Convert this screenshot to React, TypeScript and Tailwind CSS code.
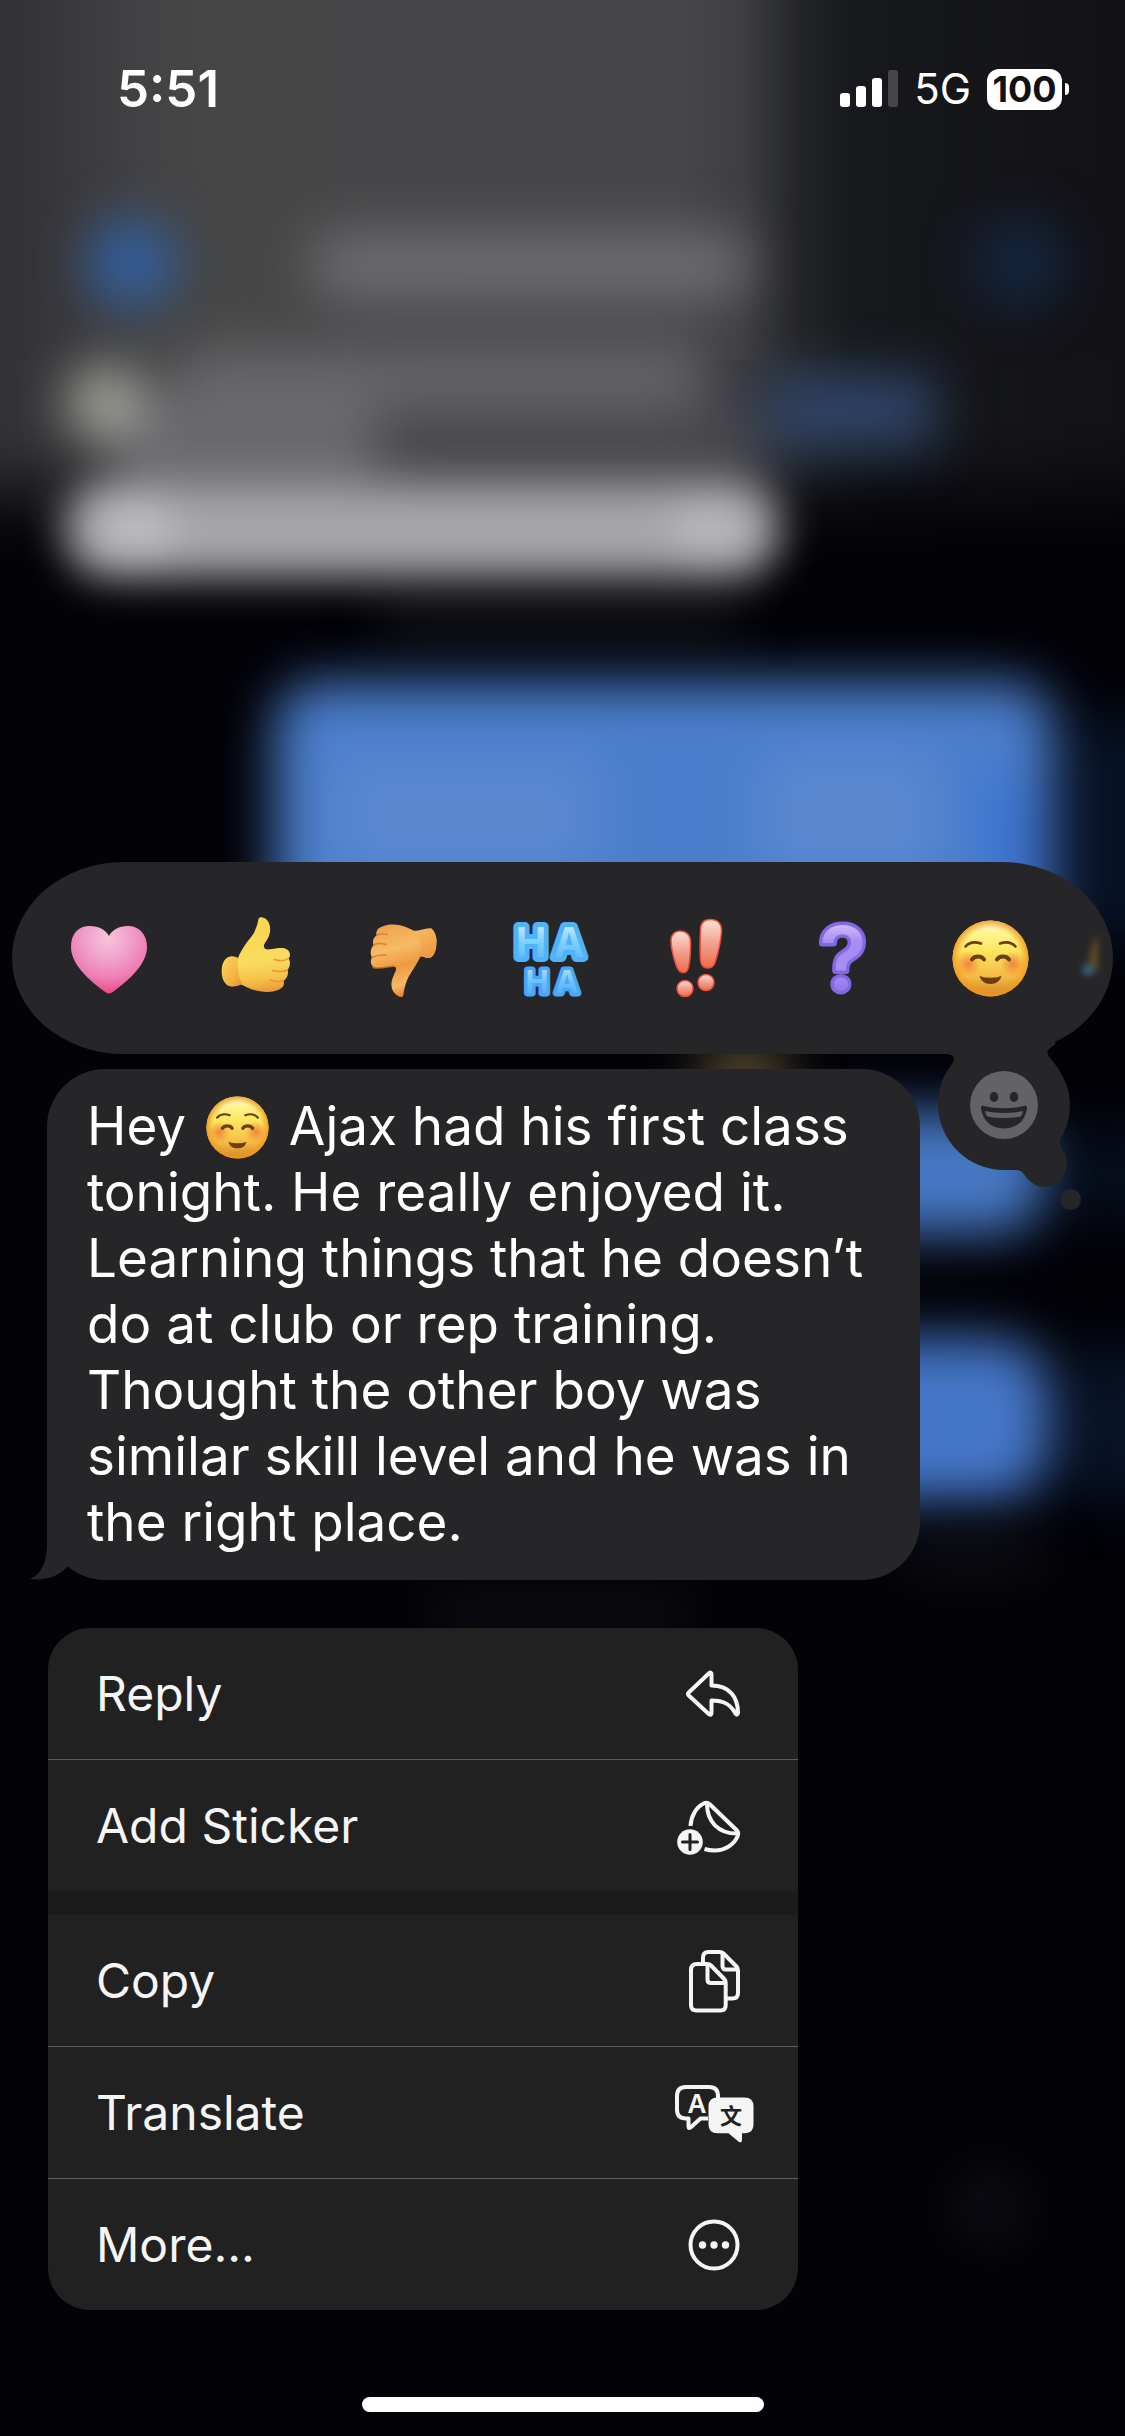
import React from "react";

function Backdrop() {
  return (
    <svg
      aria-hidden="true"
      className="absolute inset-0 h-full w-full"
      viewBox="0 0 1125 2436"
      preserveAspectRatio="xMidYMin slice"
    >
      <defs>
        <linearGradient id="bar" gradientUnits="userSpaceOnUse" x1="0" x2="1125" y1="0" y2="0">
          <stop offset="0" stopColor="#313136" />
          <stop offset="0.05" stopColor="#38373b" />
          <stop offset="0.13" stopColor="#434345" />
          <stop offset="0.2" stopColor="#474747" />
          <stop offset="0.6" stopColor="#47464b" />
          <stop offset="0.66" stopColor="#3f3f42" />
          <stop offset="0.71" stopColor="#242528" />
          <stop offset="0.76" stopColor="#17191d" />
          <stop offset="1" stopColor="#121116" />
        </linearGradient>
        <filter id="b16" x="-60%" y="-60%" width="220%" height="220%" colorInterpolationFilters="sRGB">
          <feGaussianBlur stdDeviation="20" />
        </filter>
        <filter id="b24" x="-60%" y="-60%" width="220%" height="220%" colorInterpolationFilters="sRGB">
          <feGaussianBlur stdDeviation="26" />
        </filter>
        <filter id="b32" x="-60%" y="-60%" width="220%" height="220%" colorInterpolationFilters="sRGB">
          <feGaussianBlur stdDeviation="36" />
        </filter>
      </defs>
      <rect width="1125" height="2436" fill="#020207" />
      <rect x="-200" y="-200" width="1525" height="693" fill="url(#bar)" filter="url(#b32)" />
      <rect width="1125" height="360" fill="url(#bar)" />
      <g filter="url(#b24)">
        <circle cx="132" cy="263" r="44" fill="#325f9f" />
        <rect x="310" y="232" width="440" height="68" rx="30" fill="#6d6c71" />
        <circle cx="1020" cy="263" r="44" fill="#142742" />
        <rect x="180" y="350" width="520" height="56" fill="#68676c" />
        <rect x="120" y="390" width="255" height="110" fill="#6a696e" />
        <rect x="375" y="420" width="380" height="60" fill="#4b4a4f" />
        <rect x="765" y="375" width="170" height="72" fill="#2f4568" />
        <circle cx="106" cy="404" r="38" fill="#a9a99f" />
        <rect x="380" y="600" width="360" height="34" fill="#18181d" />
      </g>
      <g filter="url(#b16)">
        <rect x="64" y="480" width="716" height="98" rx="44" fill="#a6a5aa" />
        <circle cx="136" cy="528" r="38" fill="#bcbcc0" />
        <circle cx="710" cy="528" r="38" fill="#b6b6bb" />
      </g>
      <g filter="url(#b24)">
        <rect x="1070" y="720" width="200" height="220" fill="#071226" />
        <rect x="1070" y="1350" width="200" height="150" fill="#081326" />
        <rect x="1070" y="1130" width="200" height="90" fill="#060e1c" />
        <rect x="274" y="682" width="780" height="280" rx="44" fill="#4a7dcb" />
        <rect x="330" y="750" width="270" height="130" fill="#5987d0" />
        <rect x="760" y="750" width="180" height="130" fill="#5a88d0" />
        <rect x="985" y="780" width="50" height="140" fill="#3b72d2" />
        <rect x="600" y="1112" width="446" height="122" rx="50" fill="#4778c4" />
        <rect x="600" y="1338" width="450" height="164" rx="56" fill="#4576c8" />
      </g>
      <rect x="0" y="985" width="1125" height="74" fill="#030307" />
      <g filter="url(#b24)">
        <ellipse cx="744" cy="1070" rx="46" ry="26" fill="#6b5a35" />
        <rect x="430" y="1600" width="260" height="30" fill="#121218" />
        <circle cx="990" cy="2207" r="32" fill="#111118" />
        <rect x="900" y="1530" width="140" height="40" fill="#0f1016" />
      </g>
    </svg>
  );
}

function StatusBar() {
  return (
    <header className="relative flex h-[178px] items-center justify-between pl-[117px] pr-[56px] text-white">
      <time className="text-[51px] leading-[60px] font-semibold">5:51</time>
      <div className="flex items-center">
        <svg className="mr-[16px] h-[38px] w-[58px]" viewBox="0 0 58 38" aria-label="Signal, three of four bars" role="img">
          <rect x="0" y="23" width="10" height="14" rx="3" fill="#fff" />
          <rect x="16" y="16" width="10" height="21" rx="3" fill="#fff" />
          <rect x="32" y="8" width="10" height="29" rx="3" fill="#fff" />
          <rect x="48" y="0" width="10" height="37" rx="3" fill="#47474b" />
        </svg>
        <span className="text-[42px] leading-[48px]">5G</span>
        <div className="ml-[16px] flex items-center">
          <span className="flex h-[41px] w-[75px] items-center justify-center rounded-[12px] bg-white text-[36px] leading-[41px] font-bold text-[#121116]">
            100
          </span>
          <span className="ml-[3px] h-[12px] w-[4px] rounded-r-full bg-white" />
        </div>
      </div>
    </header>
  );
}

function SmileFace({ className }: { className: string }) {
  const id = React.useId();
  return (
    <svg className={className} viewBox="8 9 77 77" role="img" aria-label="Smiling face">
      <defs>
        <linearGradient id={id + "f"} x1="0" x2="0" y1="0" y2="1">
          <stop offset="0" stopColor="#fffbd8" />
          <stop offset="0.18" stopColor="#fff48e" />
          <stop offset="0.4" stopColor="#fbe65c" />
          <stop offset="0.75" stopColor="#f5b944" />
          <stop offset="1" stopColor="#cf8227" />
        </linearGradient>
        <radialGradient id={id + "e"}>
          <stop offset="0.78" stopColor="#f39a1e" stopOpacity="0" />
          <stop offset="1" stopColor="#f09a1c" stopOpacity="0.9" />
        </radialGradient>
        <radialGradient id={id + "c"}>
          <stop offset="0" stopColor="#f07a35" stopOpacity="0.85" />
          <stop offset="1" stopColor="#f07a35" stopOpacity="0" />
        </radialGradient>
      </defs>
      <circle cx="46.5" cy="47.5" r="38" fill={`url(#${id}f)`} />
      <circle cx="46.5" cy="47.5" r="38" fill={`url(#${id}e)`} />
      <circle cx="24" cy="53" r="13" fill={`url(#${id}c)`} />
      <circle cx="69" cy="53" r="13" fill={`url(#${id}c)`} />
      <g fill="none" stroke="#6b3e0c" strokeLinecap="round">
        <path d="M21.500 35.500 C25 31.500 31 30.500 37 32.500" strokeWidth="2.600" />
        <path d="M56 32.500 C62 30.500 68 31.500 71.500 35.500" strokeWidth="2.600" />
        <path d="M28 48.500 C30.500 44.500 37.500 44.500 40 48.500" strokeWidth="4" />
        <path d="M53 48.500 C55.500 44.500 62.500 44.500 65 48.500" strokeWidth="4" />
      </g>
      <path d="M35.500 64.500 C38 67.500 55 67.500 57.500 64.500 C56.500 70 52 73 46.500 73 C41 73 36.500 70 35.500 64.500Z" fill="#6b3e0c" />
    </svg>
  );
}

const ICON = "h-[96px] w-[96px]";

function Heart() {
  return (
    <svg className={ICON} viewBox="0 0 96 96" aria-hidden="true">
      <defs>
        <radialGradient id="heart" gradientUnits="userSpaceOnUse" cx="47" cy="28" r="58">
          <stop offset="0" stopColor="#f7c4dc" />
          <stop offset="0.4" stopColor="#f19fcb" />
          <stop offset="0.72" stopColor="#ee7bb3" />
          <stop offset="0.95" stopColor="#ec4a86" />
        </radialGradient>
      </defs>
      <path
        d="M48 83.500C46 83.500 44 82 42 80.500C27 69 10 54 10 37C10 23 18 16 28.500 16C38 16 45 20 48 26C51 20 58 16 67 16C78 16 86 24 86 37C86 54 69 69 54 80.500C52 82 50 83.500 48 83.500Z"
        fill="url(#heart)"
      />
    </svg>
  );
}

function ThumbUp() {
  return (
    <svg className={ICON} viewBox="0 0 96 96" aria-hidden="true">
      <defs>
        <linearGradient id="tu" x1="0.4" x2="0.5" y1="0" y2="1">
          <stop offset="0" stopColor="#f9d450" />
          <stop offset="0.6" stopColor="#f9dc5f" />
          <stop offset="0.82" stopColor="#f7c54b" />
          <stop offset="1" stopColor="#eb9d3c" />
        </linearGradient>
        <linearGradient id="tuc" x1="0" x2="0.8" y1="0" y2="1">
          <stop offset="0" stopColor="#fbd95a" />
          <stop offset="0.7" stopColor="#f3b244" />
          <stop offset="1" stopColor="#e9983a" />
        </linearGradient>
      </defs>
      <path
        d="M50.500 9C51 6.500 56 6.500 59 10C63 14.500 63 22 60 28C58 32 55 35 56 37C57 40 60 39.500 64 39C70 38 75 37 79 39.500C83 42 82.500 46.500 80.500 48.500C83 52 82 57 79.500 60C81 64 79 68.500 75.500 71C77 75 74.500 78.500 70 80C64 82.500 56 82.500 48 80.500C41 79 37 76 33 74.500C24 78 17 76 14.500 68C12.500 60 14 50 20.500 47C24 45.500 27 47.500 30 48C33 40 39 32 43.500 26.500C47 22 49.500 15 50.500 9Z"
        fill="url(#tu)"
      />
      <path d="M30 48C24 45 19 47 16.500 51C13 58 13.500 68 18.500 74.500C23 78.500 30 76 34 73.500C30 66 29 56 30 48Z" fill="url(#tuc)" />
      <g fill="none" stroke="#e98a35" strokeWidth="1.500" strokeLinecap="round" opacity="0.85">
        <path d="M80.500 48.500C76 51.500 71 51 66 49.500" />
        <path d="M79.500 60C75 62.500 69 61.500 64.500 60.500" />
        <path d="M75.500 71C71 72.500 66 71.500 62 70" />
      </g>
    </svg>
  );
}

function ThumbDown() {
  return (
    <svg className={ICON} viewBox="0 0 96 96" aria-hidden="true">
      <defs>
        <linearGradient id="td" x1="0.2" x2="0.45" y1="0" y2="1">
          <stop offset="0" stopColor="#f0a24a" />
          <stop offset="0.35" stopColor="#f5bb66" />
          <stop offset="0.6" stopColor="#ef9a3f" />
          <stop offset="0.85" stopColor="#f7b968" />
          <stop offset="1" stopColor="#ee7f2b" />
        </linearGradient>
        <linearGradient id="tdc" x1="0" x2="0.4" y1="0" y2="1">
          <stop offset="0" stopColor="#f6bd69" />
          <stop offset="1" stopColor="#f09a40" />
        </linearGradient>
      </defs>
      <path
        d="M46.500 87C42 86.500 37 82 36.500 76C36 70 39 65 41 60C42 57 39 56 35 56.500C29 57 24 58.500 19.500 57.500C15.500 56 15 51 17 47.500C14.500 43 16 38 18.500 35C17 31 19 27 21.500 25.500C20.500 20 24 17 29 16C36 13.500 45 14.500 52 17.500C57 19.500 62 23 66 22C76 16 80 20 81.500 29C82 38 80 46 75 48C71 48.500 68 46 65.500 46.500C62 54 57 61 53.500 67C50.500 73 49 80 48.500 84.500C48 86.500 47.500 87 46.500 87Z"
        fill="url(#td)"
      />
      <path d="M59 21C66 21 71 17.500 76.500 18.500C81 22 82.500 31 80.500 39C79 46 75 49 70.500 47.500L65.500 46C67 38 65 28 59 21Z" fill="url(#tdc)" />
      <g fill="none" stroke="#e0711f" strokeWidth="1.500" strokeLinecap="round" opacity="0.8">
        <path d="M21.500 25.500C25 23 29 23.500 32 24.500" />
        <path d="M18.500 35C22 33 27 33.500 31 34.500" />
        <path d="M17 47.500C21 45.500 26 45 31 45" />
        <path d="M18 57.500C25 59.500 33 56.500 40 56" />
      </g>
    </svg>
  );
}

function HaHa() {
  return (
    <svg className={ICON} viewBox="0 0 96 96" aria-hidden="true">
      <defs>
        <linearGradient id="ha" gradientUnits="userSpaceOnUse" x1="0" x2="0" y1="12" y2="53">
          <stop offset="0" stopColor="#d3edfe" />
          <stop offset="0.5" stopColor="#7dd0fc" />
          <stop offset="1" stopColor="#56b4fb" />
        </linearGradient>
        <linearGradient id="ha2" gradientUnits="userSpaceOnUse" x1="0" x2="0" y1="55" y2="87">
          <stop offset="0" stopColor="#c0e5fd" />
          <stop offset="0.5" stopColor="#6cc5fb" />
          <stop offset="1" stopColor="#50a9fb" />
        </linearGradient>
      </defs>
      <g className="font-['Inter'] font-bold" textAnchor="middle" strokeLinejoin="round" paintOrder="stroke">
        <text x="29 67" y="47" fontSize="41" stroke="#50b2fa" strokeWidth="10" fill="url(#ha)">HA</text>
        <text x="35 65" y="83" fontSize="31" stroke="#4aa6fa" strokeWidth="7" fill="url(#ha2)">HA</text>
      </g>
    </svg>
  );
}

function Exclaim() {
  return (
    <svg className={ICON} viewBox="0 0 96 96" aria-hidden="true">
      <defs>
        <linearGradient id="ex" x1="0" x2="0" y1="0" y2="1">
          <stop offset="0" stopColor="#fae0d9" />
          <stop offset="0.5" stopColor="#f2a08d" />
          <stop offset="1" stopColor="#ef6b4c" />
        </linearGradient>
      </defs>
      <g fill="url(#ex)" stroke="#ee4f3b" strokeWidth="1.500">
        <path d="M31 21C37 21 41.500 25 41.500 32C41.500 42 41 51 39.500 57C38.500 61 37 62.500 34.500 62.500C31.500 62.500 29 60.500 27.500 56C24 46 22 37 22 30C22 25 26 21 31 21Z" />
        <path d="M61.500 9.500C69 9.500 73 14 72.500 22C71.500 33 69 43 66.500 51C65 56 62.500 58 59 58C54.500 58 52 55.500 51.500 50C51 42 51 31 51.500 20C51.500 13 55 9.500 61.500 9.500Z" />
        <circle cx="36" cy="78.500" r="8" />
        <circle cx="57" cy="72.500" r="8" />
      </g>
    </svg>
  );
}

function Question() {
  return (
    <svg className={ICON} viewBox="0 0 96 96" aria-hidden="true">
      <defs>
        <linearGradient id="qu" gradientUnits="userSpaceOnUse" x1="0" x2="0" y1="10" y2="86">
          <stop offset="0" stopColor="#d9c4fb" />
          <stop offset="0.3" stopColor="#a78bf3" />
          <stop offset="0.7" stopColor="#a98ff4" />
          <stop offset="1" stopColor="#8a6de9" />
        </linearGradient>
      </defs>
      <text
        className="font-['Inter'] font-semibold"
        x="47"
        y="80"
        fontSize="88"
        textAnchor="middle"
        strokeLinejoin="round"
        paintOrder="stroke"
        stroke="#8467e6"
        strokeWidth="7"
        fill="url(#qu)"
      >
        ?
      </text>
    </svg>
  );
}

const REACTIONS = [
  { label: "Love", art: <Heart /> },
  { label: "Like", art: <ThumbUp /> },
  { label: "Dislike", art: <ThumbDown /> },
  { label: "Laugh", art: <HaHa /> },
  { label: "Emphasise", art: <Exclaim /> },
  { label: "Question", art: <Question /> },
  { label: "Smile", art: <SmileFace className="h-[77px] w-[77px]" /> },
];

function Reactions() {
  return (
    <section aria-label="Reactions" className="relative z-10 mx-[12px]">
      <div className="flex h-[192px] items-center overflow-hidden rounded-[112px/96px] bg-[#262628] pl-[23px]">
        {REACTIONS.map((r) => (
          <button key={r.label} aria-label={r.label} className="flex h-[147px] w-[147px] shrink-0 items-center justify-center">
            {r.art}
          </button>
        ))}
        <button aria-label="More emoji" className="shrink-0">
          <svg className="h-[96px] w-[48px]" viewBox="0 0 48 96" aria-hidden="true">
            <defs>
              <filter id="soft" x="-50%" y="-50%" width="200%" height="200%" colorInterpolationFilters="sRGB">
                <feGaussianBlur stdDeviation="3" />
              </filter>
            </defs>
            <g filter="url(#soft)">
              <path d="M34 24V62L24 58L26 40Z" fill="#604a26" />
              <circle cx="24" cy="60" r="6" fill="#31607a" />
            </g>
          </svg>
        </button>
      </div>
      <button aria-label="Choose an emoji" className="absolute right-[23px] top-[168px]">
        <svg className="h-[190px] w-[160px]" viewBox="0 0 160 190" aria-hidden="true">
          <path
            d="M6 24H14C24 24 26 28 22 34C13 45 8 58 8 74A66 66 0 0 0 74 140H84C92 140 92 142 96 147C101 153 107 157 114 157A23 23 0 0 0 137 134C137 127 134 122 131 117C129 113 130 110 133 104C138 95 140 84 140 74C140 60 134 44 121 29C114 22 118 19 126 14L118 0H6Z"
            fill="#262628"
          />
          <circle cx="140.500" cy="169.500" r="10.500" fill="#262628" />
          <circle cx="74" cy="75" r="34" fill="#636267" />
          <ellipse cx="64" cy="67" rx="4.200" ry="5" fill="#262628" />
          <ellipse cx="84" cy="67" rx="4.200" ry="5" fill="#262628" />
          <path d="M51 77.500C51 76 52 75.500 54 76C67 79 81 79 94 76C96 75.500 97 76 97 77.500C96 90 87 98.500 74 98.500C61 98.500 52 90 51 77.500Z" fill="#262628" />
          <path d="M55 81C67 83.500 81 83.500 93 81C92.500 83 91.500 86 90.500 86.500C80 88.500 68 88.500 57.500 86.500C56.500 86 55.500 83 55 81Z" fill="#636267" />
        </svg>
      </button>
    </section>
  );
}

function Message() {
  return (
    <article className="relative ml-[47px] mt-[15px] w-[873px] max-w-[82%] rounded-[58px] bg-[#262628] pb-[25px] pl-[40px] pr-[40px] pt-[24px] text-white">
      <svg className="absolute bottom-0 left-[-19px] h-[64px] w-[62px]" viewBox="0 0 62 64" aria-hidden="true">
        <path d="M19 0V26C19 44 15 57 2 63C17 65 32 60 40 50L60 20L40 0Z" fill="#262628" />
      </svg>
      <p className="relative text-[53px] leading-[66px]">
        Hey <SmileFace className="mx-[5px] inline-block h-[63px] w-[63px] align-[-14px]" /> Ajax had his first class tonight. He really
        enjoyed it. Learning things that he doesn’t do at club or rep training. Thought the other boy was similar skill
        level and he was in the right place.
      </p>
    </article>
  );
}

const LINE = { fill: "none", stroke: "#f5f5f5", strokeWidth: 4, strokeLinecap: "round", strokeLinejoin: "round" } as const;

function ReplyIcon() {
  return (
    <svg className={ICON} viewBox="0 0 96 96" aria-hidden="true" {...LINE}>
      <path d="M22.500 46.800L43 27.200Q45.500 25.500 45.500 28.500V39.500C63 39.500 72 50.500 72 67Q71.500 70 69.500 67.500C64.500 58.500 58 54.500 45.500 54.500V66.500Q45.500 70 43 68.200L22.500 49.200Q21.500 48 22.500 46.800Z" />
    </svg>
  );
}

function StickerIcon() {
  return (
    <svg className={ICON} viewBox="0 0 96 96" aria-hidden="true">
      <g {...LINE} strokeLinecap="butt">
        <path d="M24.500 48C25 38 30.500 29 37.500 25.500Q41 23.500 44 26.500L71 52.500Q73 55 71.500 58.500C68 67 58 72.500 49 72.500C45 72.500 41.500 72 38.500 71" />
        <path d="M41 26C41 43 52 56 72 55.500" />
      </g>
      <circle cx="24" cy="64" r="12.800" fill="#f5f5f5" />
      <path d="M24 56.500V71.500M16.500 64H31.500" stroke="#212122" strokeWidth="3" strokeLinecap="round" />
    </svg>
  );
}

function CopyIcon() {
  return (
    <svg className={ICON} viewBox="0 0 96 96" aria-hidden="true" {...LINE} strokeLinecap="butt">
      <path d="M31 31H41.500Q43.500 31 45 32.500L58.200 46Q59.700 47.500 59.700 50V72Q59.700 77.500 54.500 77.500H30.500Q25 77.500 25 72V37Q25 31 31 31Z" />
      <path d="M41.500 31V46.500Q41.500 50 45 50H59.500" />
      <path d="M37 30V24.500Q37 19 42.500 19H53.500Q56 19 57.500 20.500L70.500 33.500Q72 35 72 37.500V60Q72 65.500 66.500 65.500H60" />
      <path d="M56.500 19.500V33Q56.500 36.500 60 36.500H71.500" />
    </svg>
  );
}

function TranslateIcon() {
  return (
    <svg className={ICON} viewBox="0 0 96 96" aria-hidden="true">
      <path
        {...LINE}
        strokeLinecap="butt"
        d="M42 53.500H34.500L24.500 62.500Q22.500 64 22.500 61.500V53.500H20Q11 53.500 11 44.500V31Q11 22 20 22H43Q52 22 52 31V33"
      />
      <path
        d="M51.500 32.500H78.500Q87.500 32.500 87.500 41.500V59.500Q87.500 68 79 68.200H76V75Q76 78.500 73 77L62.500 68.200H51.500Q42.500 68.200 42.500 59.500V41.500Q42.500 32.500 51.500 32.500Z"
        fill="#f5f5f5"
      />
      <text x="31" y="48" textAnchor="middle" fontSize="26" fill="#f5f5f5" className="font-['Inter'] font-semibold">A</text>
      <text x="65" y="58.500" textAnchor="middle" fontSize="22" fill="#212122" className="font-['Noto_Sans_CJK_SC',sans-serif] font-bold">文</text>
    </svg>
  );
}

function MoreIcon() {
  return (
    <svg className={ICON} viewBox="0 0 96 96" aria-hidden="true">
      <circle cx="48" cy="48" r="23.500" {...LINE} />
      <g fill="#f5f5f5">
        <circle cx="36.500" cy="48" r="3.700" />
        <circle cx="48" cy="48" r="3.700" />
        <circle cx="59.500" cy="48" r="3.700" />
      </g>
    </svg>
  );
}

const GROUPS = [
  [
    { label: "Reply", icon: <ReplyIcon /> },
    { label: "Add Sticker", icon: <StickerIcon /> },
  ],
  [
    { label: "Copy", icon: <CopyIcon /> },
    { label: "Translate", icon: <TranslateIcon /> },
    { label: "More...", icon: <MoreIcon /> },
  ],
];

function Menu() {
  return (
    <nav
      aria-label="Message actions"
      className="relative ml-[48px] mt-[48px] flex w-[750px] max-w-[80%] flex-col gap-[24px] overflow-hidden rounded-[42px] bg-[#1b1b1b]"
    >
      {GROUPS.map((group, i) => (
        <ul key={i} className="divide-y divide-[#5c5c5e] bg-[#212122]">
          {group.map((item) => (
            <li key={item.label}>
              <button className="flex h-[131px] w-full items-center justify-between pl-[48px] pr-[36px] text-left text-[48px] leading-[60px] text-[#f5f5f5]">
                {item.label}
                {item.icon}
              </button>
            </li>
          ))}
        </ul>
      ))}
    </nav>
  );
}

export default function App() {
  return (
    <main className="relative flex min-h-screen flex-col overflow-hidden bg-[#020207] font-['Inter',sans-serif]">
      <Backdrop />
      <StatusBar />
      <div className="h-[684px]" />
      <Reactions />
      <Message />
      <Menu />
      <div className="relative mx-auto mt-auto mb-[24px] h-[15px] w-[402px] rounded-full bg-white" />
    </main>
  );
}
